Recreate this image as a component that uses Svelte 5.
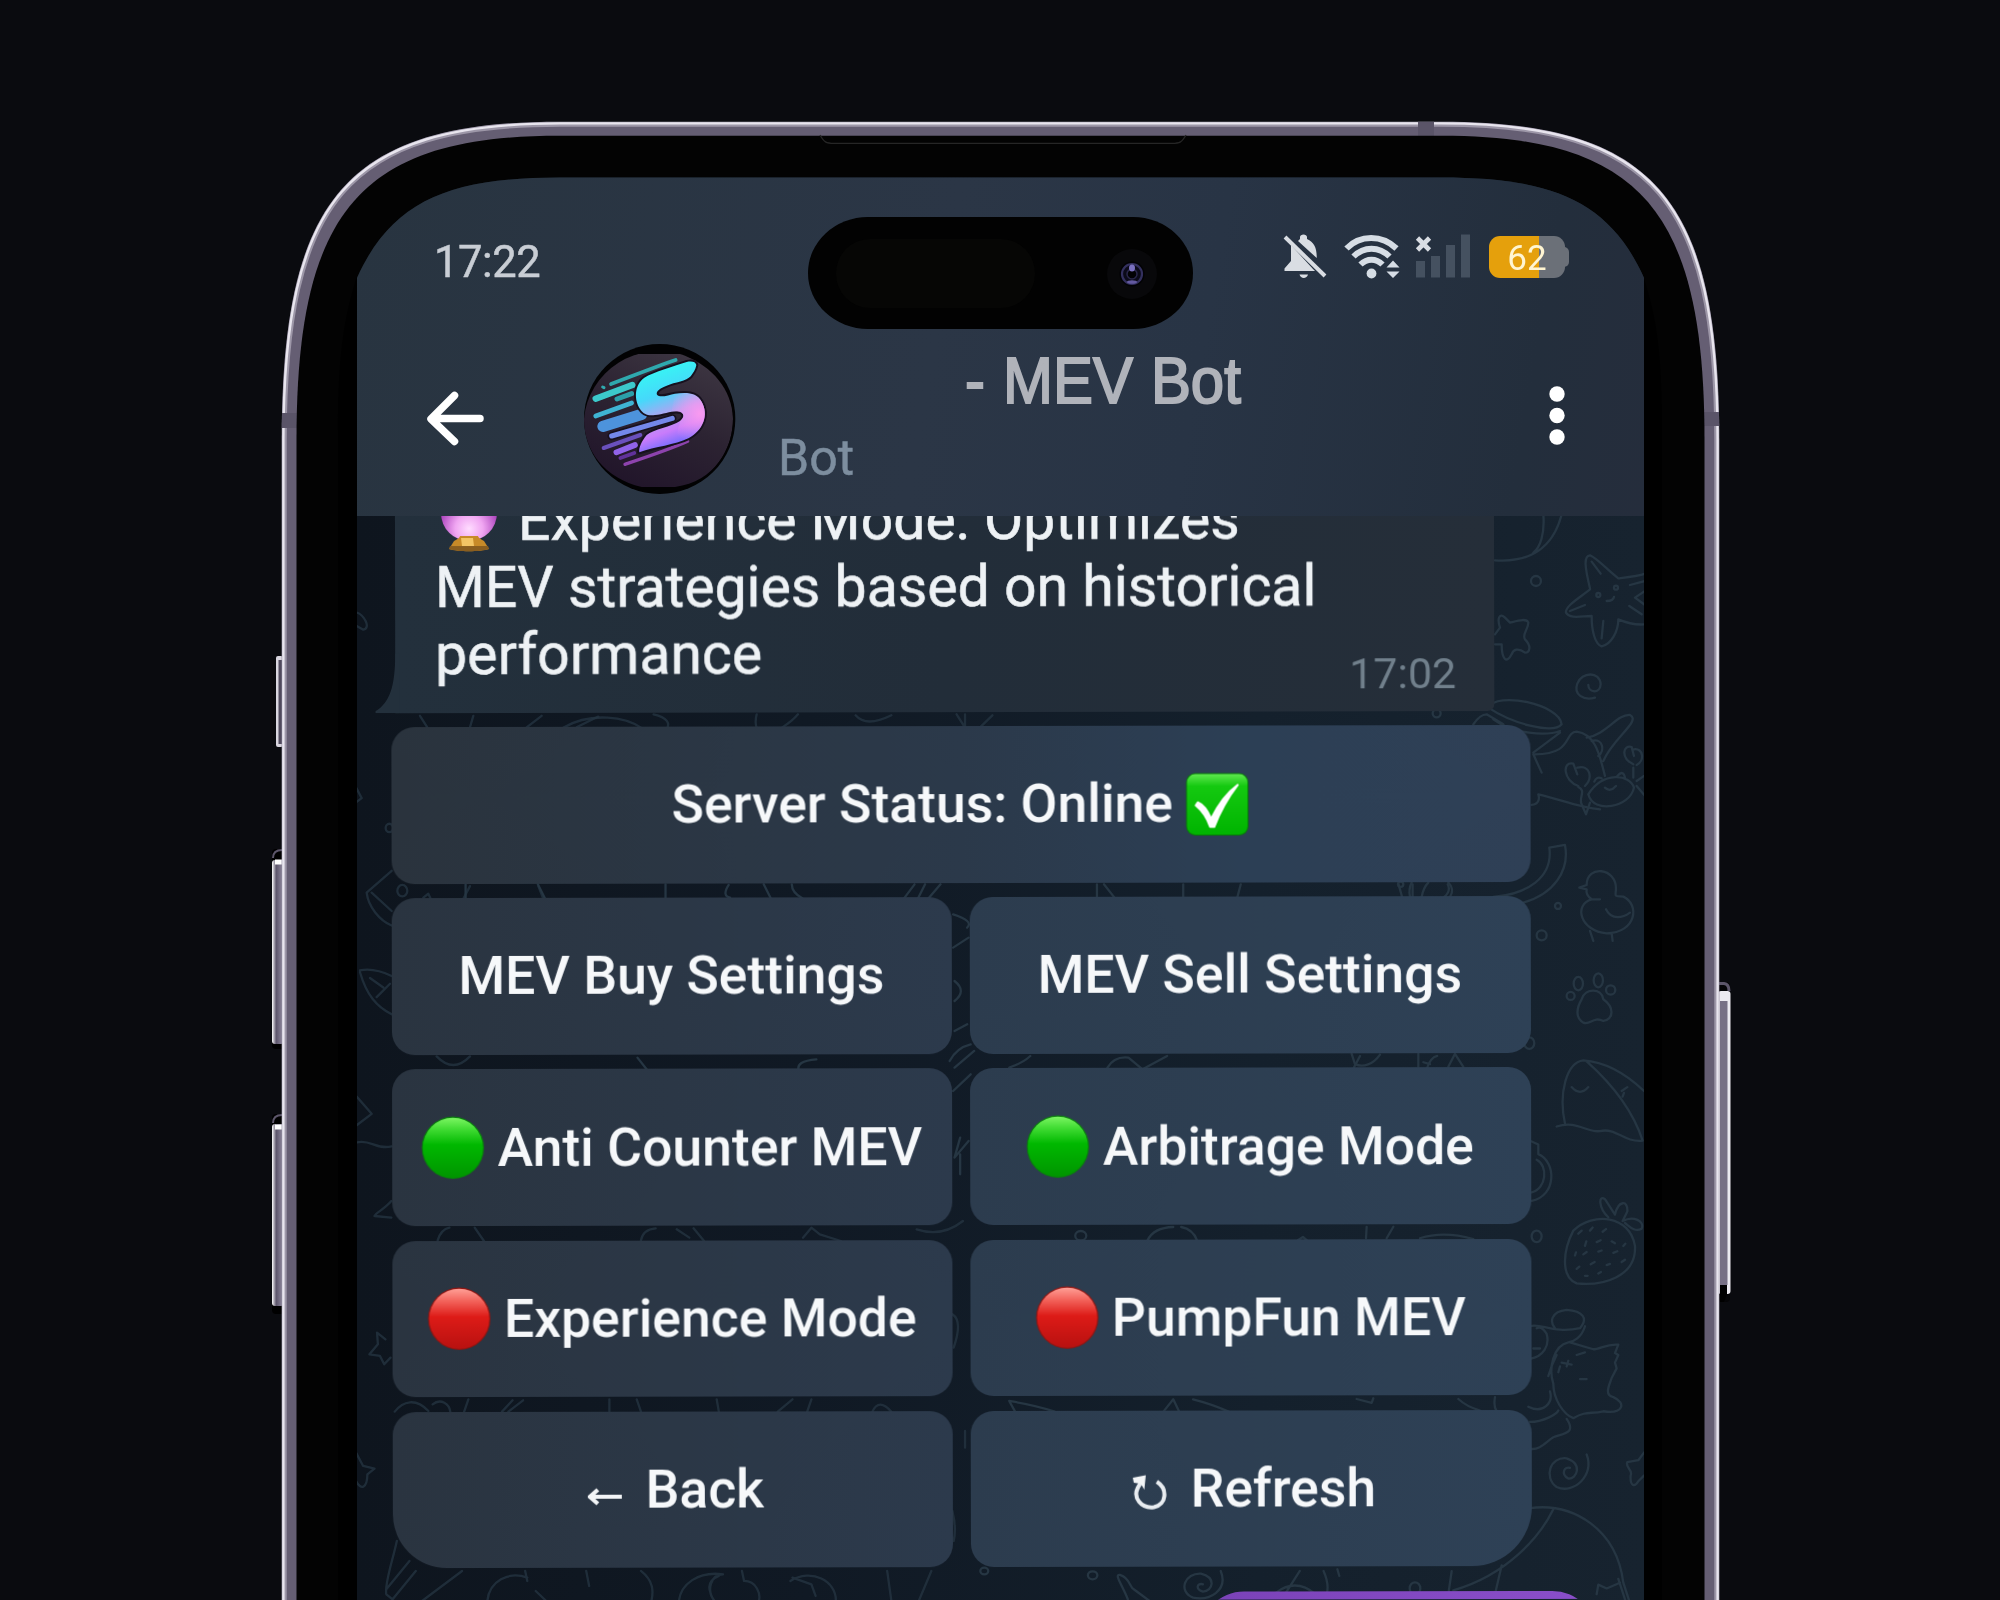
<script>
  const buttons = [
    { label: 'Server Status: Online', icon: 'check', trailing: true, wide: true },
    { label: 'MEV Buy Settings' },
    { label: 'MEV Sell Settings' },
    { label: 'Anti Counter MEV', icon: 'green' },
    { label: 'Arbitrage Mode', icon: 'green' },
    { label: 'Experience Mode', icon: 'red' },
    { label: 'PumpFun MEV', icon: 'red' },
    { label: 'Back', icon: 'back' },
    { label: 'Refresh', icon: 'refresh' }
  ];
</script>

{#snippet glyph(name)}
  {#if name === 'check'}
    <svg class="emoji" viewBox="0 0 62 62">
      <rect x="0.5" y="0.5" width="61" height="61" rx="9" fill="#067a08" />
      <rect x="1.5" y="1.5" width="59" height="59" rx="8" fill="url(#greenSquare)" />
      <path d="M12 29 C17 31 22 38 25 45 C32 31 40 20 51 12 C41 25 33 40 28 53 L24 53 C21 44 16 37 10 32Z" fill="#fff" stroke="#fff" stroke-width="2" stroke-linejoin="round" />
    </svg>
  {:else if name === 'green' || name === 'red'}
    <svg class="emoji" viewBox="0 0 62 62">
      <circle cx="31" cy="31" r="30.5" fill={name === 'green' ? '#0b7d10' : '#8f1613'} />
      <circle cx="31" cy="31" r="29.3" fill={name === 'green' ? 'url(#greenBall)' : 'url(#redBall)'} />
    </svg>
  {:else if name === 'back'}
    <svg class="small" viewBox="0 0 34 62">
      <path d="M34 38 H5 M10 31 L2 38 L10 45" fill="none" stroke="#f3f5f7" stroke-width="4.2" stroke-linejoin="round" />
    </svg>
  {:else}
    <svg class="small" viewBox="0 0 34 62">
      <path d="M24 24 C35 31 34 47 21 49.5 C8 51 0 40 5 30 L9 23" fill="none" stroke="#e9edf1" stroke-width="4" />
      <path d="M0 20 L13 17.5 L11.5 32 L8 26 L1 25Z" fill="#f3f5f7" />
    </svg>
  {/if}
{/snippet}

<div class="stage">
  <svg class="frame" width="2000" height="1600" viewBox="0 0 2000 1600">
    <defs>
      <linearGradient id="sideKey" x1="0" x2="1">
        <stop offset="0" stop-color="#fff" />
        <stop offset=".35" stop-color="#5c556b" />
        <stop offset="1" stop-color="#9a93a8" />
      </linearGradient>
      <linearGradient id="greenBall" x1="0" y1="0" x2="0" y2="1">
        <stop offset="0" stop-color="#7cf562" />
        <stop offset=".18" stop-color="#43dd35" />
        <stop offset=".45" stop-color="#00b800" />
        <stop offset="1" stop-color="#009500" />
      </linearGradient>
      <linearGradient id="redBall" x1="0" y1="0" x2="0" y2="1">
        <stop offset="0" stop-color="#ff9f96" />
        <stop offset=".2" stop-color="#f3645c" />
        <stop offset=".47" stop-color="#dd1b17" />
        <stop offset="1" stop-color="#b81110" />
      </linearGradient>
      <linearGradient id="greenSquare" x1="0" y1="0" x2="0" y2="1">
        <stop offset="0" stop-color="#5fe84f" />
        <stop offset=".2" stop-color="#14c910" />
        <stop offset="1" stop-color="#00b400" />
      </linearGradient>
    </defs>
    <g>
      <rect x="276" y="656" width="7" height="91" rx="2" fill="#d9d6df" />
      <rect x="278.5" y="660" width="5" height="84" fill="#4f495c" />
      <rect x="272" y="849" width="12" height="200" rx="4" fill="#000" />
      <path d="M273 858 Q273 850 282 850" fill="none" stroke="#5c566a" stroke-width="2" />
      <rect x="272" y="860" width="12" height="184" rx="3" fill="url(#sideKey)" />
      <path d="M275 862 H282" stroke="#fff" stroke-width="5" />
      <rect x="272" y="1114" width="12" height="200" rx="4" fill="#000" />
      <path d="M273 1123 Q273 1115 282 1115" fill="none" stroke="#5c566a" stroke-width="2" />
      <rect x="272" y="1124" width="12" height="182" rx="3" fill="url(#sideKey)" />
      <path d="M275 1127 H282" stroke="#fff" stroke-width="5" />
      <rect x="1718" y="982" width="12" height="320" rx="4" fill="#050507" />
      <path d="M1718 983.500 H1724 Q1729 984 1729 991" fill="none" stroke="#5c566a" stroke-width="3" />
      <rect x="1718" y="991" width="12.500" height="303" rx="3" fill="#eceaf0" />
      <rect x="1720" y="1001" width="7.500" height="284" fill="#777085" />
      <path d="M1720 1285 H1727 V1294 L1724 1302 H1720Z" fill="#000" />
    </g>
    <clipPath id="body">
      <path d="M281.7 1610 V440 C282 200 345 121.7 560 121.7 H1441 C1656 121.7 1719 200 1719.3 440 V1610Z" />
    </clipPath>
    <g clip-path="url(#body)">
      <path d="M281.7 1610 V440 C282 200 345 121.7 560 121.7 H1441 C1656 121.7 1719 200 1719.3 440 V1610Z" fill="#655e73" stroke="#9d97a8" stroke-width="10" />
      <path d="M283.4 1610 V440 C283.7 201 346 123.4 560 123.4 H1441 C1655 123.4 1717.3 201 1717.6 440 V1610Z" fill="none" stroke="#e8e5ee" stroke-width="2.4" />
      <path d="M281 413 H297 V428 H281Z M1704 412 H1720 V426 H1704Z M1418 121 H1434 V136 H1418Z" fill="#5a5468" />
    </g>
    <path d="M296.5 1610 V440 C296.5 211 360 135.7 560 135.7 H1441 C1641 135.7 1704.5 211 1704.5 440 V1610Z" fill="#030303" />
    <path d="M338 1610 V430 C338 360 343 320 357 276 V1610Z M1662 1610 V430 C1662 360 1658 320 1643 276 V1610Z" fill="#000" />
    <path d="M820 135 C824 142 826 143.4 834 143.4 H1172 C1180 143.4 1182 142 1186 135" fill="none" stroke="#262626" stroke-width="1.3" />
  </svg>

  <main class="screen">
    <header>
      <div class="status">
        <span class="clock">17:22</span>
        <svg class="indicators" width="190" height="50" viewBox="1281 231 190 50">
          <path d="M1291 245 L1313 269 L1315 271 H1284.5 V268.5 L1291 261Z M1298 241 L1300 239 V237 C1300 233.500 1307 233.500 1307 237 V239 C1314 242 1317 248 1316.700 258Z M1299.500 274.500 H1308 C1307 279 1300.500 279 1299.500 274.500Z" fill="#d9dde3" />
          <path d="M1285 237 L1325 276" stroke="#d9dde3" stroke-width="4" />
          <g fill="none" stroke="#d6dde5" stroke-width="6">
            <path d="M1346.500 248.500 C1360 234.500 1382 234.500 1396.500 248.500" />
            <path d="M1353.500 256.500 C1364 246 1379 246 1389.500 256.500" />
            <path d="M1360.500 264.500 C1367 258 1376 258 1382.500 264.500" />
          </g>
          <circle cx="1371.500" cy="273.500" r="4.900" fill="#d6dde5" />
          <path d="M1386.500 267.500 L1393 260.500 L1399.500 267.500Z M1386.500 271.500 L1393 278 L1399.500 271.500Z" fill="#d6dde5" />
          <path d="M1417.500 238 L1429.500 250 M1429.500 238 L1417.500 250" stroke="#d9dde3" stroke-width="4.600" />
          <path d="M1416 261 H1425 V277.500 H1416Z M1431 256 H1440 V277.500 H1431Z M1446 245 H1455 V277.500 H1446Z M1461 234.500 H1470 V277.500 H1461Z" fill="#455160" />
        </svg>
        <span class="battery"><span>62</span></span>
      </div>
      <div class="bar">
        <svg width="58" height="58" viewBox="0 0 58 58">
          <path d="M53 29.500 H6 M27.500 6.500 L4 30 L27.500 52.500" fill="none" stroke="#fff" stroke-width="7.500" stroke-linecap="round" stroke-linejoin="round" />
        </svg>
        <svg class="avatar" width="152" height="151" viewBox="27 27 456 453">
          <defs>
            <clipPath id="face"><ellipse cx="250" cy="252" rx="224" ry="222" /></clipPath>
            <clipPath id="crop"><rect x="26" y="57" width="448" height="399" /></clipPath>
            <linearGradient id="disc" x1=".8" y1="0" x2=".3" y2="1">
              <stop offset="0" stop-color="#3e3743" />
              <stop offset=".5" stop-color="#2c2332" />
              <stop offset="1" stop-color="#21152a" />
            </linearGradient>
            <linearGradient id="mark" x1="210" y1="120" x2="290" y2="340" gradientUnits="userSpaceOnUse">
              <stop offset="0" stop-color="#38f3f4" />
              <stop offset=".3" stop-color="#46d8fa" />
              <stop offset=".58" stop-color="#b7a0f2" />
              <stop offset=".78" stop-color="#c97cfb" />
              <stop offset="1" stop-color="#6b6bff" />
            </linearGradient>
            <radialGradient id="pink" cx="375" cy="235" r="95" gradientUnits="userSpaceOnUse">
              <stop offset="0" stop-color="#f99af0" />
              <stop offset="1" stop-color="#f99af0" stop-opacity="0" />
            </radialGradient>
          </defs>
          <ellipse cx="254" cy="252" rx="227" ry="225" fill="#020203" />
          <g clip-path="url(#crop)">
            <g clip-path="url(#face)">
              <path d="M27 252 A226 222 0 0 1 330 62 C410 95 470 160 474 250 C474 340 420 440 300 456 H200 C90 430 27 350 27 252Z" fill="url(#disc)" />
              <g fill="none" stroke-linecap="round">
                <path d="M108 147 C180 120 240 96 302 75" stroke="#2fa9ae" stroke-width="11" />
                <path d="M62 191 L172 150" stroke="#3cc9cb" stroke-width="19" />
                <path d="M126 192 L170 176" stroke="#2ba0aa" stroke-width="15" />
                <path d="M83 156 L87 158" stroke="#2fa9ae" stroke-width="9" />
                <path d="M62 243 L170 204" stroke="#3fb3d3" stroke-width="14" />
                <path d="M84 274 L200 238" stroke="#4d93dc" stroke-width="34" />
                <path d="M86 339 L196 300" stroke="#6a50bd" stroke-width="12" />
                <path d="M124 352 L180 330" stroke="#9163ea" stroke-width="17" />
                <path d="M136 369 L178 354" stroke="#61329b" stroke-width="11" />
                <path d="M150 388 C210 368 280 345 338 319" stroke="#8d43ad" stroke-width="10" />
              </g>
              <path d="M364 90 C362 80 350 78 335 81 C300 92 235 112 208 128 C176 152 178 195 195 222 C205 238 220 243 240 240 C270 238 300 222 318 232 C330 240 325 250 315 258 C290 275 235 283 215 300 C200 318 190 340 193 352 C240 335 300 330 340 310 C385 285 402 240 380 200 C365 170 330 172 300 176 C280 180 255 190 246 179 C242 168 255 160 275 152 C300 142 335 138 347 124 C354 114 362 104 364 90Z" fill="url(#mark)" stroke="#17111f" stroke-width="12" paint-order="stroke" stroke-linejoin="round" />
              <path d="M300 176 C330 172 365 170 380 200 C402 240 385 285 340 310 L300 322 L315 258 C325 250 330 240 318 232 L290 228Z" fill="url(#pink)" />
              <path d="M110 303 L292 250" stroke="#17111f" stroke-width="25" stroke-linecap="round" />
              <path d="M110 303 L292 250" stroke="#7488ea" stroke-width="15" stroke-linecap="round" />
            </g>
          </g>
        </svg>
        <div class="titles">
          <h1>- MEV Bot</h1>
          <p>Bot</p>
        </div>
        <svg width="16" height="62" viewBox="0 0 16 62">
          <g fill="#fff"><circle cx="8" cy="9" r="7.700" /><circle cx="8" cy="30.500" r="7.700" /><circle cx="8" cy="52" r="7.700" /></g>
        </svg>
      </div>
    </header>

    <svg class="doodles" width="1287" height="1085" viewBox="357 515 1287 1085">
      <g fill="none" stroke="#263643" stroke-width="2.300" stroke-linecap="round" stroke-linejoin="round">
        <g transform="translate(1340 500) scale(.3333)">
          <path d="M610 40 C615 100 600 140 580 155 M665 40 C640 140 570 185 465 178" />
          <circle cx="588" cy="240" r="15" />
          <path d="M750 262 C735 200 730 165 750 163 C775 175 800 205 835 232 C870 228 900 225 915 218 M750 265 C720 290 675 315 678 335 C690 355 725 345 755 345 C755 390 765 430 785 436 C815 430 835 390 835 355 C870 370 895 372 915 370 M755 182 L782 218 M690 330 L735 312 M790 360 L785 412 M800 300 Q820 300 822 288 M915 240 L870 252 M915 270 L885 290 L915 312 M868 315 L905 340" />
          <circle cx="775" cy="282" r="6" /><circle cx="828" cy="260" r="6" />
          <path d="M465 400 L480 380 C470 350 480 335 495 350 L510 365 C530 360 560 350 565 365 C565 385 545 400 555 415 C575 435 570 455 555 455 C535 440 520 445 515 460 C500 490 485 475 485 430 L465 430" />
          <path d="M765 590 C730 600 700 580 712 548 C725 512 780 510 782 550 C780 580 745 575 745 552" />
          <path d="M445 620 C470 570 660 610 665 670 C640 700 520 670 445 620 M460 655 C520 700 620 705 660 690 M400 670 Q420 640 440 640 L490 670 M580 755 L660 695 M585 760 C700 760 670 695 710 692 C770 700 780 770 795 825 M740 710 C800 700 830 640 870 642 C905 660 820 710 790 780 M755 720 C790 710 795 750 775 765 M580 760 L605 815 M575 912 C595 910 600 895 595 880 C660 895 720 920 780 925" />
          <path d="M715 855 C670 840 665 780 700 788 L712 820 M712 800 C750 790 760 830 735 855 M880 790 C840 770 850 730 875 738 L882 765 M882 745 C910 740 915 780 890 792 M745 880 C790 810 870 820 882 860 C870 920 760 940 745 880 M715 858 C740 870 715 890 725 910 L738 940 L750 905 M880 800 V830 M890 840 L912 825 M890 855 L915 885 M795 860 Q810 875 828 855 M763 842 Q770 825 785 832 M832 825 Q850 805 855 830" />
          <path d="M628 1040 L675 1032 C690 1110 640 1180 550 1205 M628 1040 C640 1130 560 1180 460 1188" />
          <path d="M740 1165 L718 1160 L740 1152 C740 1090 830 1100 828 1165 C825 1190 825 1185 850 1187 C900 1210 890 1295 800 1297 C720 1290 700 1210 755 1195 C740 1185 738 1175 740 1165 M755 1195 H780 M798 1225 C815 1260 850 1250 870 1235 M750 1290 L760 1320 M815 1297 L818 1320" />
          <circle cx="654" cy="1215" r="9" /><circle cx="605" cy="1303" r="15" />
          <ellipse cx="715" cy="1448" rx="14" ry="20" /><ellipse cx="775" cy="1438" rx="14" ry="21" /><circle cx="692" cy="1485" r="12" /><circle cx="812" cy="1467" r="14" />
          <path d="M725 1495 C735 1460 785 1460 790 1495 C825 1520 820 1555 790 1560 C760 1545 750 1575 730 1565 C705 1550 710 1520 725 1495" />
          <path d="M210 1188 Q205 1165 215 1145 M245 1188 Q250 1160 265 1145 M325 1145 Q345 1165 330 1188" />
          <circle cx="182" cy="1150" r="8" /><circle cx="290" cy="637" r="12" />
        </g>
        <g transform="translate(1340 1000) scale(.3333 .3827)">
          <circle cx="568" cy="110" r="15" />
          <path d="M675 320 C655 240 680 160 730 155 C810 160 870 200 912 235 M740 158 C820 220 880 290 908 365 C850 370 830 330 780 340 C740 345 710 310 650 328 M695 225 Q720 250 745 225 M845 235 L862 225 M852 240 L848 250" />
          <path d="M570 365 L595 375 V400 C650 420 650 510 575 522 M590 415 C625 430 620 490 575 500" />
          <path d="M700 600 C670 650 660 720 710 738 C790 745 890 720 885 640 C870 560 760 550 700 600 M805 565 C775 540 775 505 795 518 L825 558 C835 520 865 520 862 550 L848 575 C880 560 915 575 905 595 C885 605 870 590 855 580" />
          <path d="M715 608 l10 -8 M750 600 l8 -8 M788 603 l10 -7 M735 640 l4 -12 M770 630 l12 -5 M815 628 l10 5 M705 665 l3 -8 M730 662 l10 -6 M775 655 l10 -3 M820 658 l12 -4 M850 640 l6 -6 M710 700 l8 -6 M752 688 l12 -6 M800 690 l10 -3 M845 682 l10 -6 M735 718 h8 M775 712 l8 -4" />
          <circle cx="590" cy="615" r="15" />
          <path d="M570 850 C600 840 640 870 720 855 C745 830 730 810 680 807 C630 812 630 840 645 855 M735 850 C725 880 700 890 685 892 C640 900 625 960 640 1000 C640 1040 670 1080 700 1090 C740 1070 750 1080 790 1072 C850 1080 860 1050 820 1035 C790 1030 810 1000 815 985 L830 960 L825 945 L835 925 L825 920 L835 898 C800 895 780 910 760 910 L690 892 M665 945 L695 950 M685 940 L680 955 M720 988 h20 M710 925 L735 918 M655 970 L660 955 M570 935 C610 930 630 900 620 870 C610 855 600 850 590 855 M580 908 h20 M625 980 Q635 950 650 925 M570 1100 C610 1100 650 1080 655 1070 M680 1092 C710 1130 670 1130 640 1140 C620 1150 600 1175 570 1170 M565 1060 C610 1080 640 1050 630 1020 M465 1035 Q460 1060 470 1072 M355 1040 Q380 1060 420 1070" />
          <path d="M740 1185 C765 1240 700 1290 650 1270 C610 1245 630 1190 680 1195 C730 1210 710 1250 685 1248 C660 1235 675 1215 690 1220" />
          <path d="M912 1180 L895 1200 L862 1205 C855 1220 880 1225 872 1240 C870 1270 885 1270 895 1255 L912 1240" />
          <path d="M570 1325 C700 1310 830 1380 850 1520 L880 1600 M640 1328 C600 1400 500 1500 340 1540 M335 1490 L325 1550 M485 1475 L465 1550 M770 1550 L775 1525 L800 1535 L840 1520 M835 1510 L865 1590" />
          <circle cx="225" cy="1535" r="16" />
          <path d="M35 138 L45 165 C70 175 100 165 120 140 M235 138 V172 M250 160 L270 165 M325 172 L345 138 L370 172 M80 590 L78 620 M160 590 L140 620 M240 620 Q310 600 400 622 M50 1040 L95 1050 L100 1038" />
        </g>
        <g class="dim" transform="translate(260 600) scale(.3333 .3827)">
          <path d="M290 30 C310 35 335 70 310 75 L290 65 M290 490 L305 515 L290 525 M395 705 L320 762 C325 800 360 835 395 848 M335 762 L395 810 M300 965 C330 960 360 965 395 980 M300 970 C320 1030 350 1060 395 1080 M330 985 L370 1010 M350 1035 L390 1000 M290 1295 L335 1340 L290 1370 M290 1415 C330 1405 350 1435 395 1425" />
          <circle cx="427" cy="757" r="15" /><circle cx="388" cy="593" r="11" />
          <path d="M480 300 L502 330 M640 300 L630 330 M845 300 L800 330 M1015 302 L950 330 M630 745 L610 778 M835 745 L850 778 M530 1190 Q580 1235 630 1190 M490 775 L505 765 L512 778" />
        </g>
        <g class="dim" transform="translate(340 480) scale(.4209 .3333)">
          <path d="M530 740 C600 690 680 710 715 740 M745 700 C780 710 785 730 775 745 M990 700 Q985 725 990 740 M1050 740 Q1075 720 1088 700 M1225 703 Q1250 740 1310 703 M1465 700 L1485 740 V700 M1520 740 L1550 703" />
        </g>
        <g transform="translate(420 760) scale(.7015 .3333)">
          <path d="M65 370 V412 M168 370 L178 412 M350 370 V412 M440 372 Q430 405 442 410 M490 370 L500 412 M530 370 Q530 395 545 412 M690 412 L705 370 M710 412 L720 370 M725 412 L742 370 M965 370 V410 M975 370 L990 410 M1088 370 V410 M1170 370 L1165 410 M1395 370 L1400 408 M1415 370 V408 M1465 370 Q1470 390 1460 408 M760 460 Q790 480 780 500 M760 560 L782 530 M762 660 Q780 690 762 720 M762 810 L780 790 M755 900 Q765 860 785 850 M762 920 L790 870 M310 890 L325 930 M540 930 Q535 900 565 895 M840 920 Q860 905 870 885 M980 920 Q990 885 1010 890 L1030 925 L1065 885 M1330 925 L1340 885 M1435 925 Q1440 890 1450 885 M760 990 L785 940 M770 1130 L762 1190 L782 1140 M770 1240 V1180" />
        </g>
        <g class="dim" transform="translate(340 1200) scale(.4209 .3333)">
          <path d="M122 0 C105 25 85 35 82 45 L122 50 M232 118 Q240 85 260 80 M320 80 L342 120 M715 118 Q720 85 750 82 M800 85 L830 110 M840 82 L865 120 M1100 110 L1120 80 L1140 100 L1190 120 M1370 85 Q1430 110 1480 60 M70 460 L90 430 L88 395 L108 415 M70 460 L95 465 L105 490 L120 470 M130 632 C150 600 180 590 210 630 M220 610 C240 590 260 610 262 632 M305 595 L295 632 M385 632 L410 598 M400 632 L435 598 M640 595 V632 M705 595 L715 632 M895 595 L900 632 M1040 632 L1075 595 M1120 595 L1110 632 M1265 632 Q1280 590 1310 632 M38 755 L55 795 L82 803 L65 820 C65 860 50 870 38 840 M1455 340 Q1480 360 1458 440 M1455 930 Q1465 980 1458 1020 M1485 690 V740" />
          <path d="M135 1020 C125 1080 105 1150 110 1180 L125 1195 L180 1110 M110 1165 L165 1080 M195 1200 L290 1110 M350 1200 C355 1140 400 1110 445 1130 M440 1110 L445 1140 M465 1170 L490 1200 M585 1110 L592 1155 M715 1110 C745 1140 745 1170 740 1200 M805 1200 C810 1150 850 1110 910 1120 C880 1120 870 1170 890 1200 M955 1110 L960 1140 C990 1140 1000 1180 995 1200 M1070 1140 C1120 1100 1180 1140 1178 1200 M1075 1130 L1120 1150 L1130 1185 M1300 1110 L1310 1200 M1405 1110 L1375 1200 M880 1175 Q870 1140 900 1125" />
        </g>
        <g transform="translate(940 1200) scale(.3954 .3333)">
          <circle cx="356" cy="104" r="14" /><circle cx="112" cy="1110" r="10" /><circle cx="386" cy="1123" r="12" />
          <path d="M525 118 Q540 80 590 78 M610 78 Q640 85 650 118 M905 118 L918 108 L928 118 M175 600 C200 605 260 620 290 632 M175 600 L190 632 M565 632 L590 595 L605 632 M640 595 Q690 610 730 632 M475 1195 C460 1150 440 1120 455 1122 C480 1130 480 1160 490 1165 L530 1200 M710 1110 C730 1170 680 1200 640 1190 C600 1170 620 1115 660 1118 C700 1130 690 1170 665 1172 C645 1165 650 1145 665 1150 M875 1175 L910 1110 M970 1110 Q985 1150 978 1180 M850 1175 Q900 1130 950 1180 M1005 1105 L1010 1125" />
        </g>
      </g>
    </svg>

    <section class="chat">
      <article class="message">
        <svg class="tail" width="24" height="60" viewBox="0 0 24 60"><path d="M24 0 H20 C20 34 14 50 0 58 V60 H24Z" fill="#23303c" /></svg>
        <div class="body">
          <p class="first">
            <svg class="orb" width="58" height="67" viewBox="0 0 58 67">
              <defs>
                <radialGradient id="orb" cx=".5" cy=".78" r=".55">
                  <stop offset="0" stop-color="#ffdcff" />
                  <stop offset=".45" stop-color="#f0a6f2" />
                  <stop offset="1" stop-color="#a93fba" />
                </radialGradient>
              </defs>
              <circle cx="29" cy="28" r="28" fill="url(#orb)" />
              <path d="M14 56 C18 54 20 52 20 51 H38 C38 52 40 54 44 56 L49 64 C40 67 18 67 9 64Z" fill="#c78a28" />
              <path d="M21 53 H33 L34 61 H22Z" fill="#f3c565" />
              <path d="M10 61 H48 L49 64 C40 67 18 67 9 64Z" fill="#8a5e1f" />
            </svg><span>Experience Mode: Optimizes</span>
          </p>
          <p>MEV strategies based on historical</p>
          <p>performance</p>
          <time>17:02</time>
        </div>
      </article>

      <div class="keyboard">
        {#each buttons as b}
          <button class:wide={b.wide} class:first-corner={b.icon === 'back'} class:last-corner={b.icon === 'refresh'} class:arrow={b.icon === 'back' || b.icon === 'refresh'}>
            {#if b.icon && !b.trailing}{@render glyph(b.icon)}{/if}
            <span>{b.label}</span>
            {#if b.trailing}{@render glyph(b.icon)}{/if}
          </button>
        {/each}
      </div>
      <div class="outgoing"></div>
    </section>
  </main>

  <svg class="island" width="385" height="112" viewBox="0 0 385 112">
    <rect width="385" height="112" rx="60" ry="56" fill="#020202" />
    <rect x="28" y="22" width="199" height="69" rx="34" fill="#060605" />
    <circle cx="324" cy="57" r="25" fill="#08080a" />
    <circle cx="324" cy="57" r="12.500" fill="#020204" />
    <circle cx="324" cy="57" r="10" fill="#0b0a18" stroke="#33305e" stroke-width="2.200" />
    <circle cx="324" cy="57" r="5" fill="#020204" stroke="#29264a" stroke-width="1.500" />
    <ellipse cx="324" cy="51" rx="3" ry="3.500" fill="#7a70c0" />
    <ellipse cx="324" cy="65" rx="5" ry="1.800" fill="#6359a0" />
  </svg>
</div>

<style>
  :global(body) { background: #0a0b0f; overflow: hidden; }
  .stage {
    width: 2000px; height: 1600px; overflow: hidden;
    display: grid; grid-template: 1600px / 2000px;
    background: #0a0b0f;
    font-family: Roboto, "Liberation Sans", sans-serif;
  }
  .frame, .screen, .island { grid-area: 1 / 1; }
  svg { display: block; flex: none; }
  .island { margin: 217px 0 0 808px; z-index: 3; }
  .screen {
    margin: 177px 0 0 357px; width: 1287px; height: 1423px;
    display: grid; grid-template-rows: 339px 1084px; grid-template-columns: 1287px;
    background: linear-gradient(90deg, #0e151e 0, #101924 35%, #14202c 70%, #17232f 100%);
    clip-path: path("M0 1423 V101 C35 23 93 .5 203 .5 H1084 C1194 .5 1252 23 1287 101 V1423Z");
  }
  header {
    grid-area: 1 / 1; z-index: 2;
    background: linear-gradient(100deg, #283440 0, #2b3646 45%, #283445 65%, #232e3c 90%, #252d3c 100%);
  }
  .doodles { grid-area: 2 / 1; }
  .doodles path, .doodles circle, .doodles ellipse { vector-effect: non-scaling-stroke; }
  .dim { opacity: .75; }
  .chat {
    grid-area: 2 / 1; display: flex; flex-direction: column; align-items: flex-start;
    margin-top: -2px; height: 1086px; overflow: hidden; transform: rotate(-.11deg);
  }
  .status, .titles p, .avatar, .chat p, .chat button, time, .doodles { filter: blur(.7px); }
  .status { display: flex; align-items: center; height: 50px; padding: 60px 74px 0 77px; }
  .clock { flex: 1; font-size: 43.500px; line-height: 50px; letter-spacing: -.4px; color: #c9ced5; -webkit-text-stroke: .5px #c9ced5; padding-top: 2px; }
  .indicators { margin: -12px 18px 0 0; }
  .battery {
    width: 76px; height: 42px; margin: -10px 5px 0 0; border-radius: 11px;
    display: flex; align-items: center; justify-content: center;
    background: linear-gradient(90deg, #e5a00c 0, #e5a00c 50px, #6b7078 50px);
    color: #fff5d2; font-size: 35px; line-height: 42px; position: relative;
  }
  .battery span { padding-top: 3px; }
  .battery::after { content: ""; position: absolute; right: -4px; top: 11px; width: 5px; height: 20px; border-radius: 0 5px 5px 0; background: #6b7078; }
  .bar { display: flex; align-items: flex-start; padding: 57px 79px 0 70px; height: 170px; }
  .bar > svg:first-child { margin-top: 45px; }
  .avatar { margin: 0 42px 0 99px; }
  .bar > svg:last-child { margin-top: 41px; }
  .titles { flex: 1; padding-top: 5px; }
  h1 {
    margin: 0 0 13px 187px; font: 400 65.500px/64px "Liberation Sans", Arial, sans-serif; white-space: nowrap; word-spacing: 1.500px;
    color: #b0b3ba; -webkit-text-stroke: 2px #b0b3ba; transform: scaleX(.915); transform-origin: 0 0;
  }
  .titles p { margin: 0; font-size: 50px; line-height: 64px; color: #7d8e9f; -webkit-text-stroke: .5px #7d8e9f; }
  .message { flex: none; margin-left: 39px; width: 1099px; height: 198px; position: relative; }
  .tail { position: absolute; left: -20px; bottom: 0; }
  .body {
    height: 198px; overflow: hidden; border-radius: 0 0 7px 0;
    background: linear-gradient(90deg, #23303c, #222d39 50%, #252e39); padding-left: 40px; box-sizing: border-box;
  }
  .body p { margin: 0; font-size: 57px; line-height: 67px; height: 67px; letter-spacing: .08px; color: #eef2f5; -webkit-text-stroke: .6px #eef2f5; white-space: nowrap; }
  .body p.first { margin-top: -28px; display: flex; }
  .orb { margin: -2px 20px 0 5px; }
  time { float: right; margin: -38px 38px 0 0; font-size: 43px; line-height: 50px; color: #71808c; }
  .keyboard {
    flex: none; margin: 14px 0 0 34.500px; width: 1139px;
    display: grid; grid-template-columns: 560px 561px; grid-auto-rows: 156.500px; gap: 14.700px 18px;
  }
  button {
    border: 0; margin: 0; padding: 0; border-radius: 23px;
    display: flex; align-items: center; justify-content: center; gap: 13px;
    font: 500 53.500px/62px Roboto, "Liberation Sans", sans-serif; color: #f6f8fa; white-space: nowrap;
    background: linear-gradient(90deg, #2a3440, #2c3a4c);
  }
  button:nth-child(odd) { background: linear-gradient(90deg, #2c3c4e, #2e4156); }
  button.wide { grid-column: 1 / 3; background: linear-gradient(90deg, #2a333d, #2b394a 50%, #2c3f55 75%, #2f4056); }
  button.arrow { gap: 24px; padding-left: 7px; }
  .first-corner { border-bottom-left-radius: 54px; }
  .last-corner { border-bottom-right-radius: 60px; }
  .emoji { width: 63.500px; height: 63.500px; }
  .small { width: 34px; height: 62px; }
  .outgoing {
    flex: none; margin: 25px 0 0 841px; width: 398px; height: 90px; border-radius: 46px;
    background: linear-gradient(90deg, #7a42b8, #8a4fca);
  }
</style>
